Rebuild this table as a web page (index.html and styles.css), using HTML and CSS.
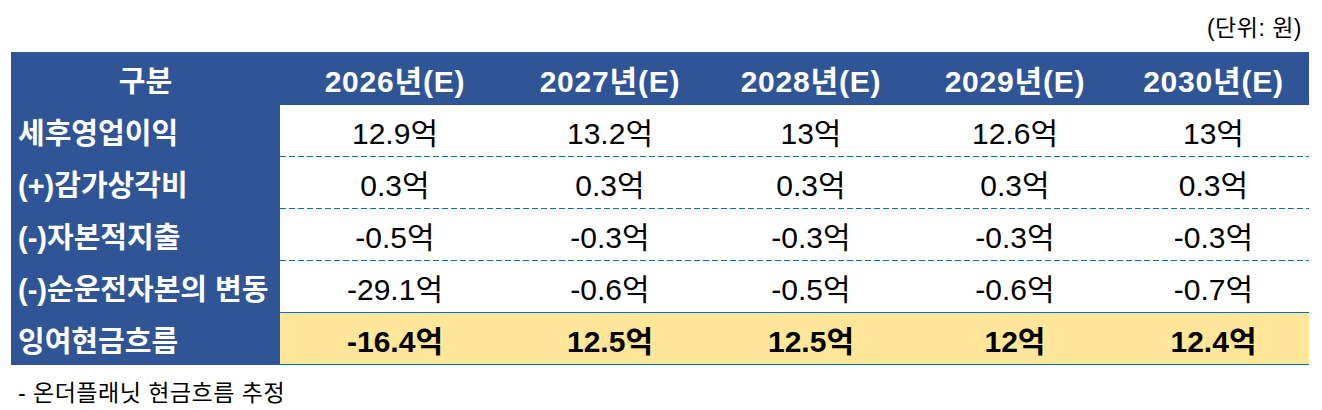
FILE: index.html
```html
<!DOCTYPE html>
<html lang="ko">
<head>
<meta charset="utf-8">
<link rel="stylesheet" href="styles.css">
</head>
<body>
<div class="unit">(단위: 원)</div>
<div class="table">
  <div class="row head">
    <div class="label center">구분</div>
    <div class="data">
      <div class="cell">2026년(E)</div>
      <div class="cell">2027년(E)</div>
      <div class="cell">2028년(E)</div>
      <div class="cell">2029년(E)</div>
      <div class="cell">2030년(E)</div>
    </div>
  </div>
  <div class="row">
    <div class="label">세후영업이익</div>
    <div class="data dashed">
      <div class="cell">12.9억</div>
      <div class="cell">13.2억</div>
      <div class="cell">13억</div>
      <div class="cell">12.6억</div>
      <div class="cell">13억</div>
    </div>
  </div>
  <div class="row">
    <div class="label">(+)감가상각비</div>
    <div class="data dashed">
      <div class="cell">0.3억</div>
      <div class="cell">0.3억</div>
      <div class="cell">0.3억</div>
      <div class="cell">0.3억</div>
      <div class="cell">0.3억</div>
    </div>
  </div>
  <div class="row">
    <div class="label">(-)자본적지출</div>
    <div class="data dashed">
      <div class="cell">-0.5억</div>
      <div class="cell">-0.3억</div>
      <div class="cell">-0.3억</div>
      <div class="cell">-0.3억</div>
      <div class="cell">-0.3억</div>
    </div>
  </div>
  <div class="row">
    <div class="label">(-)순운전자본의 변동</div>
    <div class="data solid">
      <div class="cell">-29.1억</div>
      <div class="cell">-0.6억</div>
      <div class="cell">-0.5억</div>
      <div class="cell">-0.6억</div>
      <div class="cell">-0.7억</div>
    </div>
  </div>
  <div class="row total">
    <div class="label">잉여현금흐름</div>
    <div class="data solid yellow">
      <div class="cell">-16.4억</div>
      <div class="cell">12.5억</div>
      <div class="cell">12.5억</div>
      <div class="cell">12억</div>
      <div class="cell">12.4억</div>
    </div>
  </div>
</div>
<div class="note">- 온더플래닛 현금흐름 추정</div>
</body>
</html>
```
FILE: styles.css
```css
html, body {
  margin: 0;
  padding: 0;
  background: #ffffff;
}
body {
  width: 1322px;
  height: 410px;
  font-family: "Liberation Sans", "Noto Sans CJK KR", sans-serif;
  color: #000;
}
.unit {
  height: 52px;
  box-sizing: border-box;
  padding-right: 20px;
  text-align: right;
  font-size: 23px;
  line-height: 56px;
  letter-spacing: 0.5px;
}
.table {
  margin-left: 11px;
  width: 1298px;
}
.row {
  display: flex;
  height: 52px;
}
.row.head {
  height: 53px;
  background: #2F5597;
  color: #fff;
  font-weight: 700;
}
.label {
  width: 269px;
  flex: none;
  box-sizing: border-box;
  padding-left: 7px;
  background: #2F5597;
  color: #fff;
  font-weight: 700;
  font-size: 29px;
  letter-spacing: 0;
  display: flex;
  align-items: center;
  white-space: nowrap;
}
.label.center {
  justify-content: center;
  padding-left: 0;
}
.data {
  flex: 1;
  display: grid;
  grid-template-columns: 230px 200px 202px 206px 191px;
  box-sizing: border-box;
  font-size: 30px;
}
.head .data {
  letter-spacing: 0.8px;
}
.dashed {
  background-image: linear-gradient(to right, #0070C0 6px, transparent 6px);
  background-size: 9px 1px;
  background-repeat: repeat-x;
  background-position: left bottom;
}
.solid {
  border-bottom: 1px solid #0070C0;
}
.yellow {
  background: #FFE699;
  font-weight: 700;
}
.cell {
  display: flex;
  align-items: center;
  justify-content: center;
}
.note {
  padding-left: 18px;
  font-size: 23px;
  line-height: 56px;
  letter-spacing: 0.5px;
}
```
